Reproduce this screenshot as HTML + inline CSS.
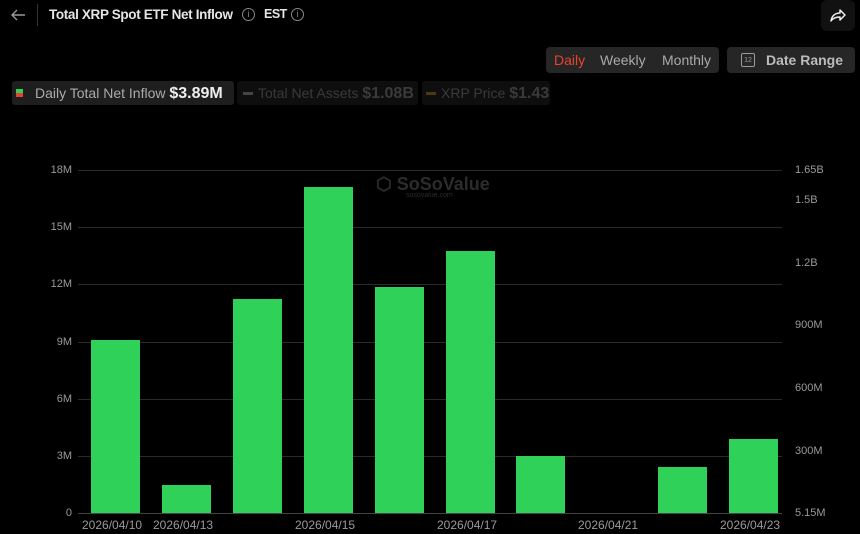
<!DOCTYPE html>
<html><head><meta charset="utf-8"><style>
body{margin:0;width:860px;height:534px;background:#000;overflow:hidden;font-family:"Liberation Sans",sans-serif;position:relative;color:#ddd}
.a{position:absolute}
.lbl{font-size:11px;color:#9a9a9a}
.gl{position:absolute;left:78px;width:704px;height:1px;background:#2a2a2a}
.bar{position:absolute;width:49px;background:#30d158;bottom:21px}
.ic{position:absolute;width:11px;height:11px;border:1px solid #888;border-radius:50%;font-size:9px;color:#888;text-align:center;line-height:11px}
</style></head><body>
<svg class="a" style="left:9px;top:6px" width="18" height="18" viewBox="0 0 18 18"><path d="M16 9H3M8 4L3 9l5 5" stroke="#999" stroke-width="1.4" fill="none"/></svg>
<div class="a" style="left:37px;top:4px;width:1px;height:22px;background:#333"></div>
<div class="a" style="left:49px;top:7px;font-size:13.5px;font-weight:bold;color:#e6e6e6;letter-spacing:-0.35px">Total XRP Spot ETF Net Inflow</div>
<div class="ic" style="left:242px;top:8px">i</div>
<div class="a" style="left:264px;top:7px;font-size:12.5px;font-weight:bold;color:#e6e6e6;letter-spacing:-0.5px">EST</div>
<div class="ic" style="left:291px;top:8px">i</div>
<div class="a" style="left:821px;top:0;width:34px;height:31px;background:#111;border-radius:6px"></div>
<svg class="a" style="left:828px;top:5px" width="20" height="20" viewBox="0 0 20 20"><path d="M3 16C4 10 8 8 12 8V5l5 5-5 5v-3C8 12 5 13 3 16z" stroke="#eee" stroke-width="1.5" fill="none" stroke-linejoin="round"/></svg>
<div class="a" style="left:546px;top:47px;width:173px;height:26px;background:#262626;border-radius:4px"></div>
<div class="a" style="left:554px;top:52px;font-size:14px;color:#e8432f">Daily</div>
<div class="a" style="left:600px;top:52px;font-size:14px;color:#aaa">Weekly</div>
<div class="a" style="left:662px;top:52px;font-size:14px;color:#aaa">Monthly</div>
<div class="a" style="left:727px;top:47px;width:128px;height:26px;background:#262626;border-radius:4px"></div>
<div class="a" style="left:741px;top:53px;width:12px;height:12px;border:1px solid #999;border-radius:2px;font-size:7px;color:#999;text-align:center;line-height:13px">12</div>
<div class="a" style="left:766px;top:52px;font-size:14px;font-weight:bold;color:#bbb">Date Range</div>
<div class="a" style="left:12px;top:81px;width:222px;height:24px;background:#1e1e1e;border-radius:3px"></div>
<div class="a" style="left:16px;top:89px;width:7px;height:4px;background:#30d158"></div>
<div class="a" style="left:16px;top:93px;width:7px;height:4px;background:#e8432f"></div>
<div class="a" style="left:35px;top:85px;font-size:14px;color:#aaa">Daily Total Net Inflow <b style="color:#eee;font-size:16px">$3.89M</b></div>
<div class="a" style="left:237px;top:81px;width:181px;height:24px;background:#0e0e0e;border-radius:3px"></div>
<div class="a" style="left:243px;top:92px;width:10px;height:3px;background:#444"></div>
<div class="a" style="left:258px;top:85px;font-size:14px;color:#3a3a3a">Total Net Assets <b style="font-size:16px">$1.08B</b></div>
<div class="a" style="left:422px;top:81px;width:128px;height:24px;background:#0e0e0e;border-radius:3px"></div>
<div class="a" style="left:426px;top:92px;width:10px;height:3px;background:#4a3a10"></div>
<div class="a" style="left:441px;top:85px;font-size:14px;color:#3a3a3a">XRP Price <b style="font-size:16px">$1.43</b></div>

<div class="gl" style="top:170px"></div><div class="gl" style="top:227px"></div><div class="gl" style="top:284px"></div><div class="gl" style="top:342px"></div><div class="gl" style="top:399px"></div><div class="gl" style="top:456px"></div><div class="gl" style="top:513px;background:#444"></div>
<div class="a" style="left:376px;top:174px;font-size:18px;font-weight:bold;color:#2c2c2c">⬡ SoSoValue</div>
<div class="a" style="left:406px;top:192px;font-size:7px;color:#2c2c2c">sosovalue.com</div>
<div class="a lbl" style="right:788px;top:164px;text-align:right">18M</div>
<div class="a lbl" style="right:788px;top:221px">15M</div>
<div class="a lbl" style="right:788px;top:278px">12M</div>
<div class="a lbl" style="right:788px;top:336px">9M</div>
<div class="a lbl" style="right:788px;top:393px">6M</div>
<div class="a lbl" style="right:788px;top:450px">3M</div>
<div class="a lbl" style="right:788px;top:507px">0</div>
<div class="a lbl" style="left:795px;top:164px">1.65B</div>
<div class="a lbl" style="left:795px;top:194px">1.5B</div>
<div class="a lbl" style="left:795px;top:257px">1.2B</div>
<div class="a lbl" style="left:795px;top:319px">900M</div>
<div class="a lbl" style="left:795px;top:382px">600M</div>
<div class="a lbl" style="left:795px;top:445px">300M</div>
<div class="a lbl" style="left:795px;top:507px">5.15M</div>
<div class="bar" style="left:91px;top:340px"></div>
<div class="bar" style="left:162px;top:485px"></div>
<div class="bar" style="left:233px;top:299px"></div>
<div class="bar" style="left:304px;top:187px"></div>
<div class="bar" style="left:375px;top:287px"></div>
<div class="bar" style="left:446px;top:251px"></div>
<div class="bar" style="left:516px;top:456px"></div>
<div class="bar" style="left:658px;top:467px"></div>
<div class="bar" style="left:729px;top:439px"></div>
<div class="a lbl" style="left:82px;top:518px;font-size:12px">2026/04/10</div>
<div class="a lbl" style="left:153px;top:518px;font-size:12px">2026/04/13</div>
<div class="a lbl" style="left:295px;top:518px;font-size:12px">2026/04/15</div>
<div class="a lbl" style="left:437px;top:518px;font-size:12px">2026/04/17</div>
<div class="a lbl" style="left:578px;top:518px;font-size:12px">2026/04/21</div>
<div class="a lbl" style="left:720px;top:518px;font-size:12px">2026/04/23</div>
</body></html>
